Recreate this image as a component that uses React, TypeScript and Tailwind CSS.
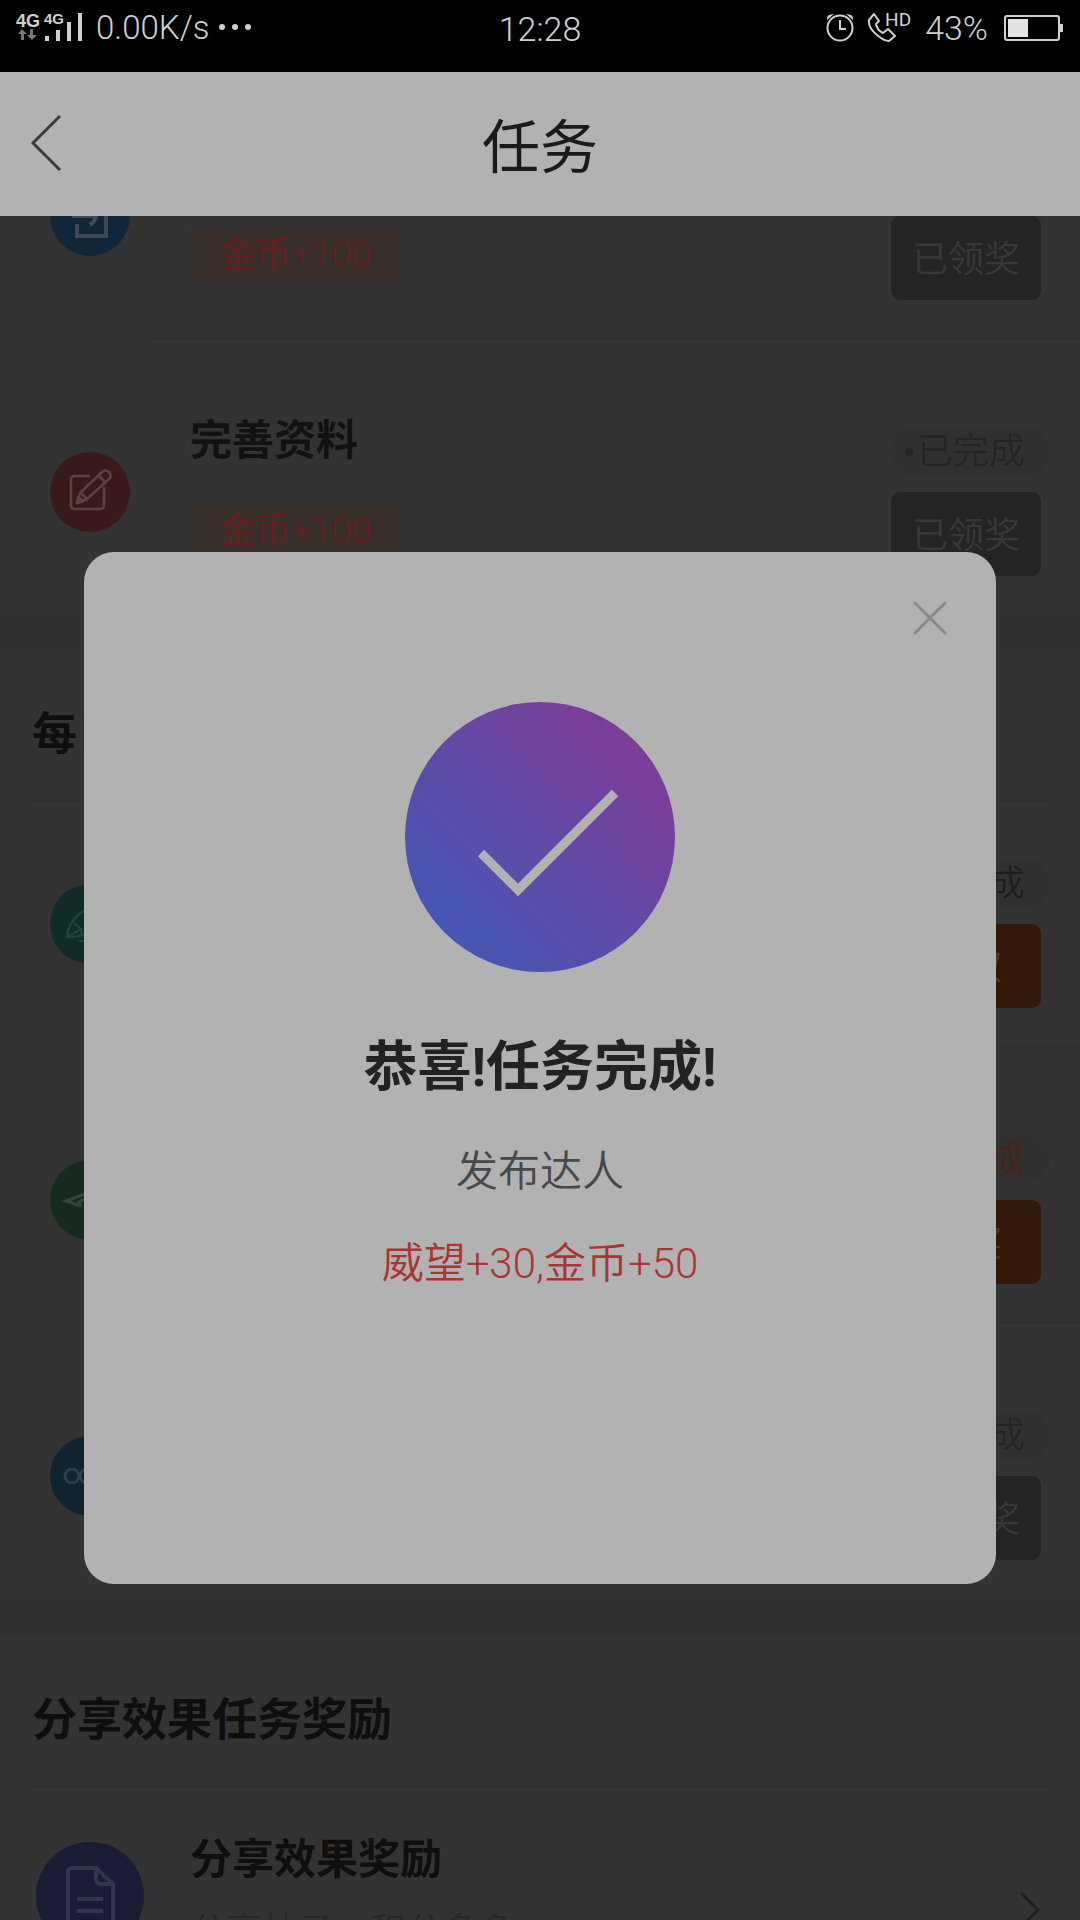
import type { ReactNode } from "react";

type Tone = "done" | "dark" | "orange";

interface Task {
  id: string;
  title?: string;
  reward?: string;
  circle: string;
  icon: ReactNode;
  status: Tone;
  action: string;
  claimed?: boolean;
}

const LoginIcon = () => (
  <svg viewBox="0 0 80 80" className="size-20" fill="none" stroke="#3f4a54" strokeWidth="4">
    <path d="M27 32V22h29v38H27V48" />
    <path d="M22 40h24M40 30l7 7q-1 8-7 12" />
  </svg>
);

const EditIcon = () => (
  <svg viewBox="0 0 80 80" className="size-20" fill="none" stroke="#5c4243" strokeWidth="2.6" strokeLinejoin="round">
    <path d="M40 24H25q-4 0-4 4v25q0 4 4 4h25q4 0 4-4V35" />
    <path d="M27 51l3-10 22-21a4.500 4.500 0 0 1 7 7L37 47z" />
    <path d="M30 40l7 7M48 23l7 7" />
    <path d="M27 51l1.500-6 4.500 4.500z" fill="#5c4243" />
  </svg>
);

const PenIcon = () => (
  <svg viewBox="0 0 80 80" className="size-20" fill="none" stroke="#2a403e" strokeWidth="2.2">
    <path d="M17 53q1-16 17-26l14 15q-9 11-31 11zM17 53l14-8M24 39l7 6 1 6M29 57h26" />
  </svg>
);

const ShareIcon = () => (
  <svg viewBox="0 0 80 80" className="size-20" fill="none" stroke="#35463a" strokeWidth="3">
    <path d="M31 46l-15-5 44-16-10 32-12-8" />
    <path d="M31 46l-2-4 20-10" />
  </svg>
);

const LinkIcon = () => (
  <svg viewBox="0 0 80 80" className="size-20" fill="none" stroke="#2d3e4b" strokeWidth="3">
    <circle cx="22" cy="40" r="7" />
    <circle cx="37" cy="40" r="7" />
  </svg>
);

const DocIcon = () => (
  <svg viewBox="0 0 108 108" className="size-[108px]" fill="none" stroke="#32364b" strokeWidth="4">
    <path d="M60 26H36q-4 0-4 4v52h45V42z" />
    <path d="M60 26v11q0 5 5 5h12" />
    <path d="M41 57h26M41 69h26" />
  </svg>
);

const newbieTasks: Task[] = [
  { id: "login", reward: "金币+100", circle: "bg-[#10273a]", icon: <LoginIcon />, status: "done", action: "已领奖", claimed: true },
  { id: "profile", title: "完善资料", reward: "金币+100", circle: "bg-[#3a191b]", icon: <EditIcon />, status: "done", action: "已领奖", claimed: true },
];

const dailyTasks: Task[] = [
  { id: "post", circle: "bg-[#122b29]", icon: <PenIcon />, status: "dark", action: "领取" },
  { id: "share", circle: "bg-[#182a1d]", icon: <ShareIcon />, status: "orange", action: "领奖" },
  { id: "invite", circle: "bg-[#10232f]", icon: <LinkIcon />, status: "done", action: "已领奖", claimed: true },
];

const statusTone: Record<Tone, string> = {
  done: "text-[#242424]",
  dark: "text-[#1c1c1c]",
  orange: "text-[#4a2418]",
};

const StatusBar = () => (
  <div className="relative z-20 grid h-[72px] shrink-0 grid-cols-3 items-start bg-black px-4 pt-2 text-[34px] leading-10 text-[#d0d0d0]">
    <div className="flex items-center gap-3">
      <svg viewBox="0 0 68 40" className="h-10 w-[68px]" fill="#d0d0d0">
        <text x="0" y="19" fontSize="18" fontWeight="700" fontFamily="Liberation Sans, sans-serif">4G</text>
        <text x="28" y="16" fontSize="15" fontWeight="700" fontFamily="Liberation Sans, sans-serif">4G</text>
        <path d="M6 21l5 5H8v6H5v-6H2zM16 32l-5-5h3v-6h3v6h4z" fill="#777" />
        <path d="M29 28h4v5h-4zM40 22h4v11h-4zM51 14h4v19h-4zM62 5h4v28h-4z" />
      </svg>
      <span className="text-[33px] font-light">0.00K/s</span>
      <svg viewBox="0 0 34 8" className="-ml-1 h-2 w-[34px]" fill="#d0d0d0">
        <circle cx="4" cy="3" r="3" />
        <circle cx="17" cy="3" r="3" />
        <circle cx="30" cy="3" r="3" />
      </svg>
    </div>
    <div className="pt-px text-center font-light">12:28</div>
    <div className="flex items-center justify-end gap-3">
      <svg viewBox="0 0 30 32" className="h-8 w-[30px]" fill="none" stroke="#d0d0d0" strokeWidth="2">
        <circle cx="15" cy="16" r="12.5" />
        <path d="M15 8v9h6" />
        <path d="M2 8q-1-6 7-6zM28 8q1-6-7-6z" fill="#d0d0d0" stroke="none" />
      </svg>
      <div className="flex items-start">
        <svg viewBox="0 0 30 32" className="h-8 w-[30px]" fill="none" stroke="#d0d0d0" strokeWidth="2" strokeLinejoin="round">
          <path d="M7 2L2 8q-1 8 8 15 7 6 12 6l6-5-7-7-5 4q-6-3-7-9l3-3z" />
        </svg>
        <span className="-ml-3 text-[19px] leading-4">HD</span>
      </div>
      <span className="pl-[2px] font-light">43%</span>
      <svg viewBox="0 0 60 28" className="ml-1 h-7 w-[60px]" fill="none" stroke="#d0d0d0" strokeWidth="2">
        <rect x="1" y="2" width="54" height="24" rx="2" />
        <path d="M4 5h20v18H4z" fill="#e2e2e2" stroke="none" />
        <path d="M56 10h3v8h-3z" fill="#d0d0d0" stroke="none" />
      </svg>
    </div>
  </div>
);

const Header = () => (
  <header className="relative z-20 grid h-36 shrink-0 grid-cols-[80px_1fr_80px] items-center bg-[#b2b2b2]">
    <button type="button" aria-label="返回" className="flex h-full items-center pl-[30px]">
      <svg viewBox="0 0 32 60" className="h-[60px] w-8" fill="none" stroke="#3c3c3c" strokeWidth="3">
        <path d="M30 2L3 29l27 27" />
      </svg>
    </button>
    <h1 className="pt-2 text-center text-[58px] leading-[72px] text-[#1a1a1a]">任务</h1>
  </header>
);

const TaskRow = ({ task, first, last }: { task: Task; first?: boolean; last?: boolean }) => (
  <li className={`flex items-end pl-[50px] ${first ? "h-[246px]" : "h-[276px]"}`}>
    <div className={`mb-[84px] size-20 shrink-0 rounded-full ${task.circle}`}>{task.icon}</div>
    <div
      className={`ml-[22px] flex h-full flex-1 items-end justify-between border-b-3 pr-[31px] pb-[37px] pl-[38px] ${last ? "border-transparent" : "border-[#303030]"}`}
    >
      <div className="mb-[18px]">
        {task.title && <h3 className="mb-[39px] text-[42px] leading-[48px] font-bold text-[#111]">{task.title}</h3>}
        {task.reward && (
          <p className="rounded-[3px] bg-[#39302b] px-[29px] text-4xl leading-[54px] font-[350] text-[#681e1f]">{task.reward}</p>
        )}
      </div>
      <div className="flex flex-col items-end">
        <p className={`mb-[17px] flex h-12 items-center rounded-full bg-[#313131] pt-[2px] pr-6 pl-4 text-4xl font-[350] ${statusTone[task.status]}`}>
          <span className="mr-1 size-2 rounded-full bg-current" />
          已完成
        </p>
        <button
          type="button"
          className={`mr-2 h-[84px] w-[150px] rounded-[9px] pt-1 text-4xl font-[350] ${task.claimed ? "bg-[#242424] text-[#393939]" : "bg-[#33190c] text-[#4a3a32]"}`}
        >
          {task.action}
        </button>
      </div>
    </div>
  </li>
);

const SectionTitle = ({ children }: { children: ReactNode }) => (
  <h2 className="mx-8 flex h-[152px] items-center border-b-3 border-[#2f2f2f] pt-5 text-[45px] font-bold text-[#0e0e0e]">{children}</h2>
);

const TaskList = () => (
  // scrolled so the first row starts under the header
  <div className="-mt-[152px]">
    <ul>
      {newbieTasks.map((task, i) => (
        <TaskRow key={task.id} task={task} last={i === newbieTasks.length - 1} />
      ))}
    </ul>
    <div className="h-[34px] bg-[#313131]" />
    <section>
      <SectionTitle>每日任务奖励</SectionTitle>
      <ul>
        {dailyTasks.map((task, i) => (
          <TaskRow key={task.id} task={task} first={i === 0} last={i === dailyTasks.length - 1} />
        ))}
      </ul>
    </section>
    <div className="h-9 bg-[#313131]" />
    <section>
      <SectionTitle>分享效果任务奖励</SectionTitle>
      <a href="#share" className="flex items-start pt-12 pr-10 pl-9">
        <div className="mt-1.5 size-[108px] shrink-0 rounded-full bg-[#191c33]">
          <DocIcon />
        </div>
        <div className="ml-[46px] flex-1">
          <h3 className="text-[42px] leading-[48px] font-bold text-[#0e0e0e]">分享效果奖励</h3>
          <p className="mt-6 text-4xl leading-[48px] font-[350] text-[#272727]">分享帖子，积分多多</p>
        </div>
        <svg viewBox="0 0 20 36" className="mt-14 h-9 w-5" fill="none" stroke="#1f1f1f" strokeWidth="3">
          <path d="M1 1l17 17L1 35" />
        </svg>
      </a>
    </section>
  </div>
);

const SuccessDialog = () => (
  <div className="absolute inset-0 z-10 flex items-center px-[84px]">
    <div role="dialog" aria-labelledby="dialog-title" className="relative flex h-[1032px] w-full flex-col items-center rounded-[30px] bg-[#b2b2b2] pt-[150px] text-center">
      <button type="button" aria-label="关闭" className="absolute top-12 right-12">
        <svg viewBox="0 0 36 36" className="size-9" fill="none" stroke="#8a8a8a" strokeWidth="3">
          <path d="M2 2l32 32M34 2L2 34" />
        </svg>
      </button>
      <svg viewBox="0 0 270 270" className="size-[270px]">
        <defs>
          <linearGradient id="badge" x1="0.1" y1="0.9" x2="0.9" y2="0.1">
            <stop offset="0" stopColor="#4258b5" />
            <stop offset="1" stopColor="#803b96" />
          </linearGradient>
        </defs>
        <circle cx="135" cy="135" r="135" fill="url(#badge)" />
        <path d="M76 151l37 37 97-97" fill="none" stroke="#b2b2b2" strokeWidth="9" />
      </svg>
      <h2 id="dialog-title" className="mt-[62px] text-[54px] leading-[68px] font-bold text-[#222]">恭喜!任务完成!</h2>
      <p className="mt-10 text-[42px] leading-[60px] font-[350] text-[#484848]">发布达人</p>
      <p className="mt-8 text-[42px] leading-[60px] font-[350] text-[#aa3434]">威望+30,金币+50</p>
    </div>
  </div>
);

export default function App() {
  return (
    <div className="flex h-screen flex-col overflow-hidden bg-[#333] font-[Roboto,'Noto_Sans_CJK_SC',sans-serif]">
      <StatusBar />
      <Header />
      <main className="relative min-h-0 flex-1">
        <TaskList />
        <SuccessDialog />
      </main>
    </div>
  );
}
